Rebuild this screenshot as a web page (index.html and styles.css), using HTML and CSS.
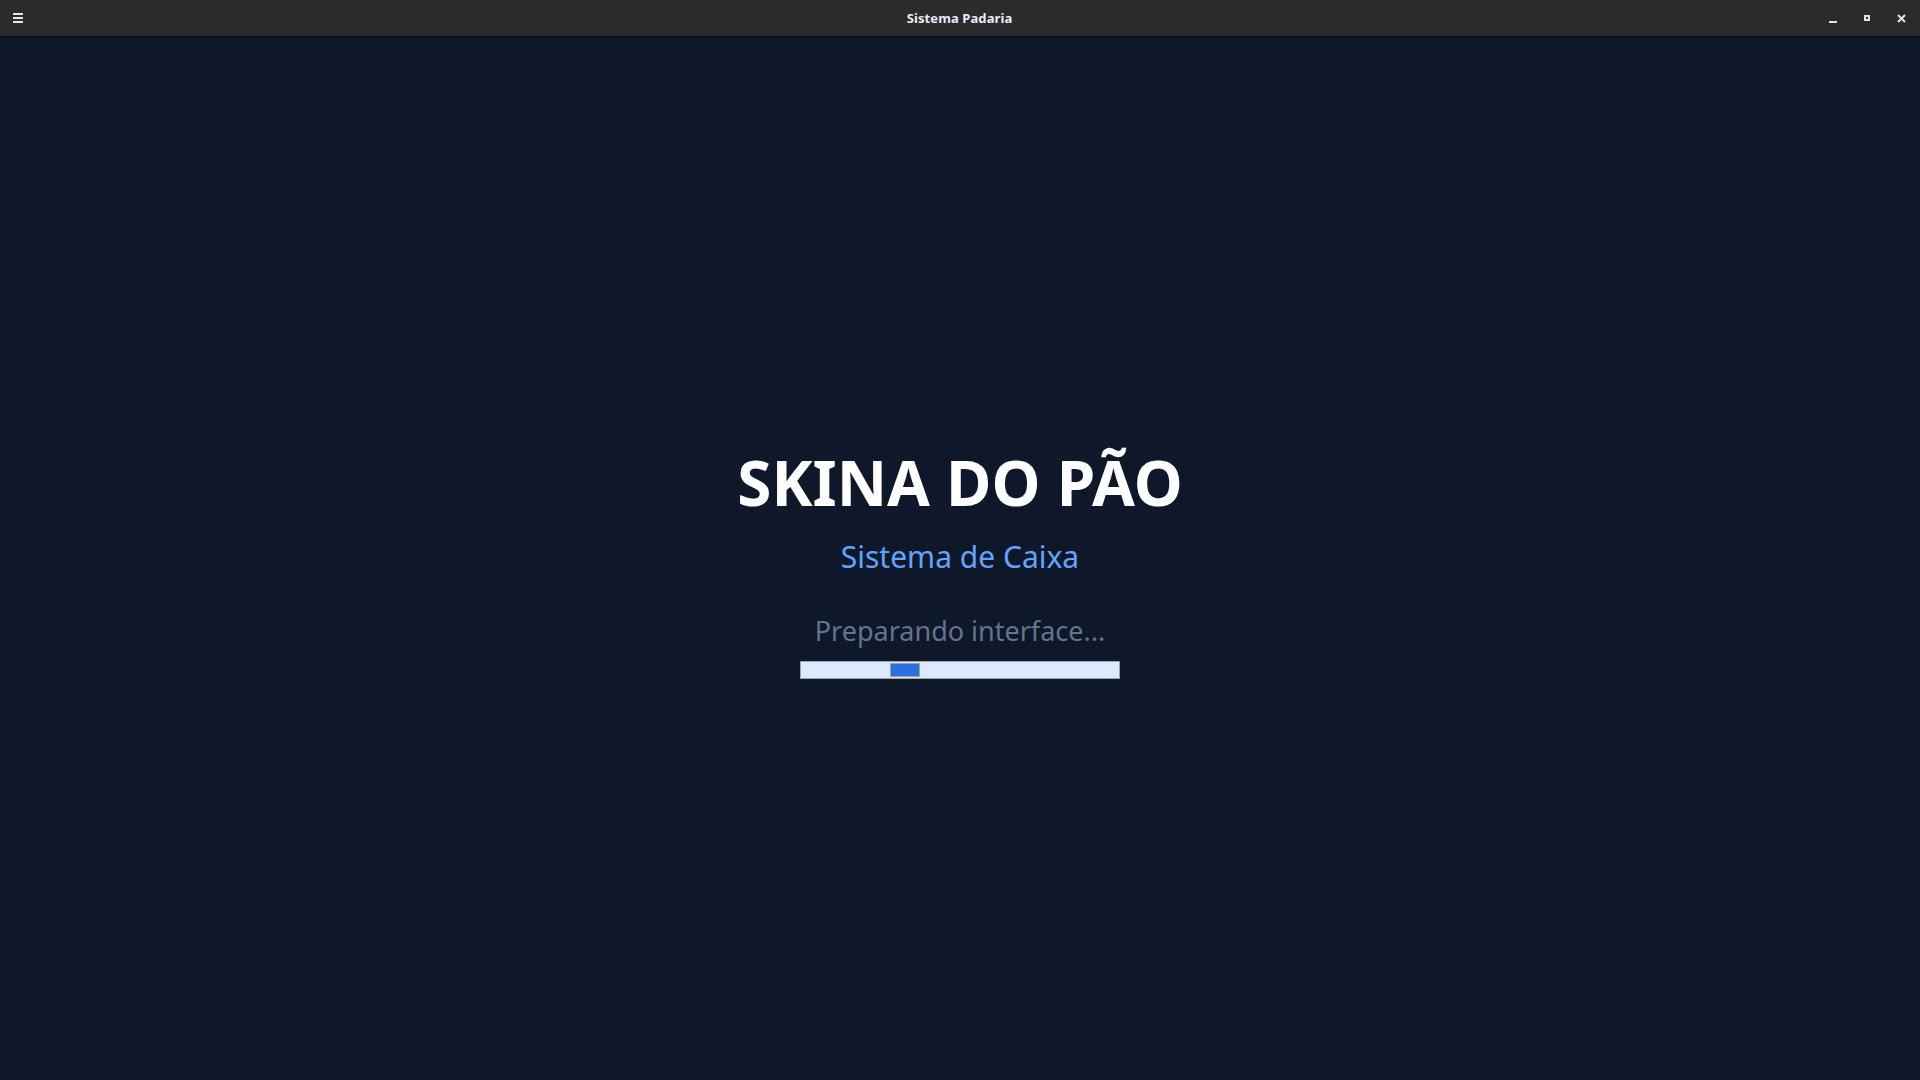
FILE: index.html
```html
<!DOCTYPE html>
<html lang="pt-BR">
<head>
<meta charset="utf-8">
<title>Sistema Padaria</title>
<link rel="stylesheet" href="styles.css">
</head>
<body>
<div class="window">
  <header class="titlebar">
    <div class="tb-left">
      <svg class="icon-menu" width="10" height="10" viewBox="0 0 10 10">
        <rect x="0" y="0" width="10" height="2" fill="#dbe7f7"/>
        <rect x="0" y="4" width="10" height="2" fill="#dbe7f7"/>
        <rect x="0" y="8" width="10" height="2" fill="#dbe7f7"/>
      </svg>
    </div>
    <div class="tb-title">Sistema Padaria</div>
    <div class="tb-right">
      <svg class="btn-min" width="8" height="2" viewBox="0 0 8 2"><rect width="8" height="2" fill="#dbe7f7"/></svg>
      <svg class="btn-max" width="6" height="6" viewBox="0 0 6 6"><rect x="0" y="0" width="6" height="6" fill="#dbe7f7"/><rect x="2" y="2" width="2" height="2" fill="#2a2a2a"/></svg>
      <svg class="btn-close" width="9" height="9" viewBox="0 0 9 9"><path d="M1 1 L8 8 M8 1 L1 8" stroke="#e8e4d8" stroke-width="2" fill="none"/></svg>
    </div>
  </header>
  <main class="content">
    <h1 class="brand">SKINA DO PÃO</h1>
    <p class="subtitle">Sistema de Caixa</p>
    <p class="status">Preparando interface...</p>
    <div class="progress"><div class="chunk"></div></div>
  </main>
</div>
</body>
</html>
```

FILE: styles.css
```css
html, body {
  margin: 0;
  padding: 0;
  height: 100%;
  background: #0f172a;
  font-family: "Noto Sans", "DejaVu Sans", sans-serif;
}

.window {
  display: flex;
  flex-direction: column;
  height: 100vh;
}

.titlebar {
  height: 36px;
  flex: 0 0 36px;
  background: #2b2b2b;
  border-bottom: 1px solid #0b0b0b;
  display: flex;
  align-items: center;
}

.tb-left {
  display: flex;
  align-items: center;
  padding-left: 13px;
  width: 120px;
}

.tb-title {
  flex: 1;
  text-align: center;
  color: #e6eefa;
  font-weight: 700;
  font-size: 13px;
  letter-spacing: 0.1px;
}

.tb-right {
  width: 120px;
  display: flex;
  align-items: center;
  justify-content: flex-end;
  padding-right: 14px;
}

.btn-min { margin-top: 8px; margin-right: 27px; }
.btn-max { margin-right: 27px; margin-top: -1px; }

.content {
  flex: 1;
  display: flex;
  flex-direction: column;
  align-items: center;
  justify-content: center;
  padding-top: 2px;
}

.brand {
  margin: 0;
  font-size: 62px;
  font-weight: 700;
  color: #ffffff;
  line-height: 84px;
}

.subtitle {
  margin: 12px 0 0;
  font-size: 30px;
  line-height: 41px;
  color: #60a5fa;
}

.status {
  margin: 35px 0 0;
  font-size: 27px;
  line-height: 37px;
  color: #64748b;
}

.progress {
  margin-top: 12px;
  width: 318px;
  height: 16px;
  border: 1px solid #9ca3af;
  background: #dbeafe;
  position: relative;
}

.chunk {
  position: absolute;
  left: 89px;
  top: 1px;
  width: 28px;
  height: 12px;
  background: #2c6fe2;
  border: 1px solid #a8a090;
}
```
